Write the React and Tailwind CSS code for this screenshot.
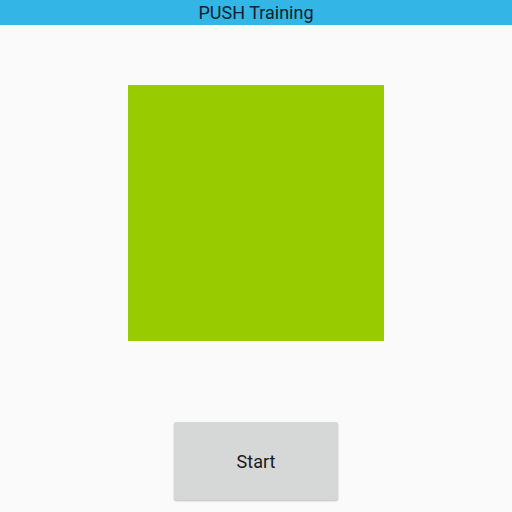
export default function App() {
  return (
    <div className="w-[512px] h-[512px] bg-[#fafafa] flex flex-col items-center overflow-hidden" style={{ fontFamily: 'Roboto, sans-serif' }}>
      <div className="w-full h-[25px] bg-[#33b5e5] flex items-center justify-center text-[18px] text-[#14202b] leading-none">
        PUSH Training
      </div>
      <div className="mt-[60px] w-[256px] h-[256px] bg-[#99cc00]" />
      <button className="mt-[81px] w-[164px] h-[78px] bg-[#d6d7d7] rounded-[2px] shadow-[0_1px_2px_rgba(0,0,0,0.25)] text-[18px] text-[#1a1a1a]">
        Start
      </button>
    </div>
  );
}
